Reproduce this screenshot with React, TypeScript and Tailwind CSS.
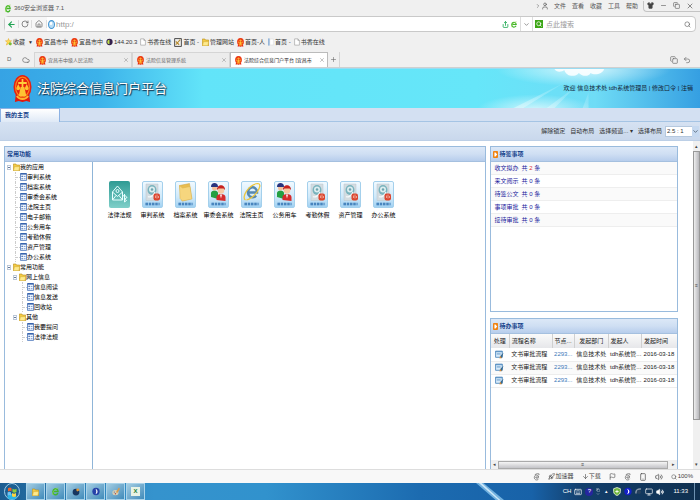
import type { ReactNode } from 'react'
import {
    ArrowDown,
    ArrowLeft,
    ChevronDown,
    ChevronRight,
    Cloud,
    Copy,
    Flag,
    House,
    Keyboard,
    Minus,
    Monitor,
    Plus,
    Rocket,
    RotateCw,
    Search,
    Share,
    Shirt,
    Smartphone,
    Undo2,
    User,
    Volume2,
    X,
} from 'lucide-react'

interface TreeItem {
    label: string
    depth: number
    folder?: boolean
}

interface AppItem {
    label: string
    kind: 'law' | 'disk' | 'folder' | 'people' | 'browser'
}

const tree: TreeItem[] = [
    { label: '我的应用', depth: 0, folder: true },
    { label: '审判系统', depth: 1 },
    { label: '档案系统', depth: 1 },
    { label: '审委会系统', depth: 1 },
    { label: '法院主页', depth: 1 },
    { label: '电子邮箱', depth: 1 },
    { label: '公务用车', depth: 1 },
    { label: '考勤休假', depth: 1 },
    { label: '资产管理', depth: 1 },
    { label: '办公系统', depth: 1 },
    { label: '常用功能', depth: 0, folder: true },
    { label: '网上信息', depth: 1, folder: true },
    { label: '信息阅读', depth: 2 },
    { label: '信息发送', depth: 2 },
    { label: '回收站', depth: 2 },
    { label: '其他', depth: 1, folder: true },
    { label: '我要提问', depth: 2 },
    { label: '法律法规', depth: 2 },
]

const apps: AppItem[] = [
    { label: '法律法规', kind: 'law' },
    { label: '审判系统', kind: 'disk' },
    { label: '档案系统', kind: 'folder' },
    { label: '审委会系统', kind: 'people' },
    { label: '法院主页', kind: 'browser' },
    { label: '公务用车', kind: 'people' },
    { label: '考勤休假', kind: 'disk' },
    { label: '资产管理', kind: 'disk' },
    { label: '办公系统', kind: 'disk' },
]

const signItems = [
    { label: '收文拟办', count: 2 },
    { label: '来文阅示', count: 0 },
    { label: '待签公文', count: 0 },
    { label: '事项审批', count: 0 },
    { label: '接待审批', count: 0 },
]

const indent = ['pl-0', 'pl-[6px]', 'pl-[13px]']

function Emblem({ className }: { className: string }) {
    return (
        <svg viewBox="0 0 20 28" preserveAspectRatio="none" className={className}>
            <path d="M3 19h14l1 8-4-1-4 1-4-1-4 1z" fill="#e3170d" />
            <ellipse cx="10" cy="12" rx="9.5" ry="12" fill="#e8200f" />
            <ellipse cx="10" cy="12" rx="7.300" ry="9.800" fill="none" stroke="#f98a1c" strokeWidth="1.200" />
            <path d="M10 4v16M5.500 8h9" stroke="#ffcf3a" strokeWidth="1.800" />
            <path d="M8 12h4l2 9H6z" fill="#ffc233" />
            <path d="M3.500 13c0 3 4 3 4 0l-2-4zM12.500 13c0 3 4 3 4 0l-2-4z" fill="#ffc233" />
            <path d="M4 21c3 4 9 4 12 0" stroke="#ffb52e" strokeWidth="2" fill="none" />
        </svg>
    )
}

function PageIcon() {
    return (
        <svg viewBox="0 0 10 12" className="h-[8px] w-[6px] shrink-0">
            <path d="M1 .8h5.500L9 3.500v7.700H1zM6.500.8v2.700H9" fill="#fff" stroke="#999" />
        </svg>
    )
}

function FolderIcon() {
    return (
        <svg viewBox="0 0 12 12" preserveAspectRatio="none" className="h-[8px] w-[7px] shrink-0">
            <path d="M.5 1.500h4.500l1 1.500h5.500v8.500H.5z" fill="#f3cb45" stroke="#b98e1c" />
            <path d="M2.500 5.500h9l-1.500 6H.8z" fill="#fdea8e" stroke="#cfa632" strokeWidth=".7" />
        </svg>
    )
}

function LeafIcon() {
    return (
        <svg viewBox="0 0 14 14" preserveAspectRatio="none" className="h-[8px] w-[7px] shrink-0">
            <path d="M1 1h12v12H1z" fill="#f2f7ff" stroke="#4a76bb" strokeWidth="1.500" />
            <path d="M1 1.500h12" stroke="#2f5ca8" strokeWidth="2.500" />
            <path d="M3 6h2.500M3 10h2.500" stroke="#2c57a0" strokeWidth="2" />
            <path d="M7.500 6H11M7.500 10H11" stroke="#5f86c4" strokeWidth="1.500" />
        </svg>
    )
}

function ToggleIcon() {
    return (
        <svg viewBox="0 0 8 8" className="h-[5px] w-[4px] shrink-0" preserveAspectRatio="none">
            <path d="M.7.7h6.600v6.600H.7z" fill="#fff" stroke="#7b93b3" />
            <path d="M2 4h4" stroke="#2c4775" strokeWidth="1.300" />
        </svg>
    )
}

function PlayIcon() {
    return (
        <svg viewBox="0 0 12 14" preserveAspectRatio="none" className="h-[7px] w-[5px] shrink-0">
            <rect width="12" height="14" rx="2" fill="#f08311" />
            <path d="M3.500 3h2.500l4 4-4 4H3.500z" fill="#fff" />
        </svg>
    )
}

function EIcon({ className }: { className: string }) {
    return (
        <svg viewBox="0 0 16 18" preserveAspectRatio="none" className={className}>
            <path d="M13.500 12a6 6 0 1 1 .5-3H4" fill="none" stroke="#43b52b" strokeWidth="3" />
            <path d="M2 16C0 10 8 2 15 2" fill="none" stroke="#8edb45" strokeWidth="1.500" />
        </svg>
    )
}

function BrowserOutline() {
    return (
        <svg viewBox="0 0 16 18" className="h-[8px] w-[7px]" fill="none" stroke="#555" strokeWidth="1.500">
            <path d="M13 13c-3 5-10 3-10-3s8-8 10-1H6c0 3 4 4 7 1" />
            <path d="M4 4c4-3 8-3 10-2l-1 3" />
        </svg>
    )
}

function AppPicture({ kind }: { kind: AppItem['kind'] }) {
    if (kind === 'law') {
        return (
            <svg viewBox="0 0 42 54" preserveAspectRatio="none" className="h-[27px] w-[21px]">
                <defs>
                    <linearGradient id="law" x1="0" y1="0" x2="0" y2="1">
                        <stop offset="0" stopColor="#2f9b94" />
                        <stop offset="1" stopColor="#7fcfc9" />
                    </linearGradient>
                </defs>
                <rect width="42" height="54" rx="4" fill="url(#law)" />
                <path d="M7 22 17 10l10 12v16H7zM7 22l10 9 10-9M7 38l7-9M27 38l-7-9" fill="none" stroke="#e9ffff" strokeWidth="2" />
                <circle cx="17" cy="20" r="3" fill="none" stroke="#e9ffff" strokeWidth="2" />
                <path d="M31 26v16M26 32l5-4 5 5-5 3 4 3-4 3" fill="none" stroke="#e9ffff" strokeWidth="2" />
            </svg>
        )
    }
    return (
        <svg viewBox="0 0 42 54" preserveAspectRatio="none" className="h-[27px] w-[21px]">
            <defs>
                <linearGradient id="tile" x1="0" y1="0" x2="0" y2="1">
                    <stop offset="0" stopColor="#f2faff" />
                    <stop offset=".6" stopColor="#cfe9fa" />
                    <stop offset="1" stopColor="#9fd0f2" />
                </linearGradient>
            </defs>
            <rect x="1" y="1" width="40" height="52" rx="3" fill="url(#tile)" stroke="#a4d0ec" strokeWidth="2" />
            {kind === 'disk' && (
                <>
                    <path d="M8 6h24v33H8z" fill="#d3dce1" stroke="#b9c6cd" />
                    <ellipse cx="20" cy="18" rx="9" ry="10" fill="#79b3bd" />
                    <ellipse cx="20" cy="17" rx="6" ry="6" fill="#dcedf0" />
                    <circle cx="20" cy="17" r="2.500" fill="#6ca5b0" />
                    <path d="M12 31c5 3 11-2 14-9" stroke="#f5f9fa" strokeWidth="2.500" fill="none" />
                    <rect x="23" y="25" width="13" height="14" rx="4" fill="#db4630" />
                    <path d="M27 34v-5M30 35v-8M33 34v-4" stroke="#ffd9cf" strokeWidth="1.200" />
                </>
            )}
            {kind === 'folder' && (
                <>
                    <path d="m9 9 20-4 4 30-19 5z" fill="#e9bd50" stroke="#caa03a" />
                    <path d="m9 9 6 5 15-3 4 25-19 4-5-5z" fill="#f6d67e" stroke="#d9b14c" />
                </>
            )}
            {kind === 'people' && (
                <>
                    <path d="M6 32V24c0-7 14-7 14 0v12z" fill="#24a043" />
                    <circle cx="13" cy="14" r="5" fill="#f4c19a" />
                    <path d="M6 12c-1-11 15-11 14 0z" fill="#28347e" />
                    <path d="M17 38V32c0-8 18-8 18 0v8z" fill="#d62b2c" />
                    <circle cx="26" cy="19" r="6.500" fill="#f6c9a2" />
                    <path d="M18 18c-1-13 17-13 16 0l-3-3H21z" fill="#c7231f" />
                    <path d="m24 27 2 8 2-8z" fill="#fff" />
                </>
            )}
            {kind === 'browser' && (
                <>
                    <path d="M30 29a9 10 0 1 1 2-6H14" fill="none" stroke="#5688b0" strokeWidth="5" />
                    <path d="M9 38C0 34 15 6 34 5c6 1 4 8-1 16-6 9-16 16-22 17" fill="none" stroke="#edc63c" strokeWidth="2.500" />
                </>
            )}
            <path d="M7 46h28" stroke="#2569ad" strokeWidth="5" strokeDasharray="5 1.500" />
            <path d="M7 46h28" stroke="#b6daf3" strokeWidth="1" />
        </svg>
    )
}

function TitleBar() {
    return (
        <div className="flex h-4 items-start justify-between pl-[5px]">
            <div className="flex h-4 items-center gap-[3px]">
                <EIcon className="h-[9px] w-[6px]" />
                <span className="text-[#555]">360安全浏览器 7.1</span>
            </div>
            <div className="flex h-3 items-center text-[#555]">
                <ChevronRight size={6} />
                <User size={8} />
                <div className="flex gap-[6px] px-[5px]">
                    <button>文件</button>
                    <button>查看</button>
                    <button>收藏</button>
                    <button>工具</button>
                    <button>帮助</button>
                </div>
                <div className="flex h-[11px] items-center gap-[6px] rounded-bl-sm border-b border-l border-[#c4c4c4] pr-[6px] pl-[3px]">
                    <button aria-label="皮肤"><Shirt size={7} fill="#444" /></button>
                    <button aria-label="最小化"><Minus size={7} /></button>
                    <button aria-label="还原"><Copy size={7} /></button>
                    <button aria-label="关闭"><X size={8} /></button>
                </div>
            </div>
        </div>
    )
}

function AddressBar() {
    return (
        <div className="mx-1 flex h-4 items-center rounded-sm border border-[#c9c9c9] bg-white">
            <div className="flex h-full items-center bg-[#f7f7f7]">
                <button aria-label="后退" className="px-[2px] text-[#21a453]"><ArrowLeft size={9} strokeWidth={3} /></button>
                <button aria-label="刷新" className="border-x border-[#ddd] px-[2px] text-[#555]"><RotateCw size={8} /></button>
                <button aria-label="主页" className="border-r border-[#ddd] px-[3px] text-[#555]"><House size={8} /></button>
            </div>
            <svg viewBox="0 0 14 16" preserveAspectRatio="none" className="ml-[1px] h-[9px] w-[7px]">
                <ellipse cx="7" cy="8" rx="6" ry="7" fill="#b9ddf5" stroke="#4695d1" strokeWidth="2" />
                <ellipse cx="6" cy="6" rx="2.500" ry="3" fill="#fff" />
            </svg>
            <input aria-label="地址" defaultValue="http:/" className="ml-[1px] min-w-0 flex-1 text-[8px] text-[#999] outline-none" />
            <div className="flex items-center gap-[2px] pr-[3px] text-[#2bae5d]">
                <Share size={7} strokeWidth={3} />
                <EIcon className="h-[7px] w-[6px]" />
            </div>
            <button aria-label="展开" className="h-full border-x border-[#ddd] px-[2px] text-[#555]"><ChevronDown size={7} /></button>
            <div className="flex w-[162px] items-center pl-[2px]">
                <span className="bg-[#3da616] p-[1px] text-white"><Search size={6} strokeWidth={3} /></span>
                <input aria-label="搜索" placeholder="点此搜索" className="ml-[3px] min-w-0 flex-1 text-[7px] outline-none placeholder:text-[#999]" />
                <Search size={7} className="mr-1 text-[#555]" />
            </div>
        </div>
    )
}

function Bookmark({ icon, children }: { icon: ReactNode; children: ReactNode }) {
    return (
        <a href="#" className="flex items-center gap-[1px]">
            {icon}
            {children}
        </a>
    )
}

function Bookmarks() {
    const emblem = <Emblem className="h-[9px] w-[7px]" />
    return (
        <div className="flex h-5 items-center gap-[3px] pl-[5px] text-[#333]">
            <Bookmark
                icon={
                    <svg viewBox="0 0 16 18" className="h-[8px] w-[7px]">
                        <path d="m8 1 2 5h5l-4 4 2 6-5-3-5 3 2-6-4-4h5z" fill="#ffdc55" stroke="#e0a018" />
                        <circle cx="12" cy="13" r="3.500" fill="#79bd36" />
                    </svg>
                }
            >
                收藏
            </Bookmark>
            <span className="text-[5px]">▼</span>
            <Bookmark icon={emblem}>宜昌市中</Bookmark>
            <Bookmark icon={emblem}>宜昌市中</Bookmark>
            <Bookmark
                icon={
                    <svg viewBox="0 0 12 14" className="h-[8px] w-[7px]">
                        <circle cx="6" cy="7" r="5.500" fill="#34204f" />
                        <path d="M6 3a4 4 0 0 0 0 8z" fill="#bfe04a" />
                    </svg>
                }
            >
                144.20.3
            </Bookmark>
            <Bookmark icon={<PageIcon />}>书香在线</Bookmark>
            <Bookmark
                icon={
                    <svg viewBox="0 0 14 16" className="h-[9px] w-[8px]">
                        <path d="M1 1h12v14H1z" fill="#eee" stroke="#333" strokeWidth="1.500" />
                        <path d="m3 12 8-9M3 6l6 6" stroke="#b78c2f" strokeWidth="2" />
                    </svg>
                }
            >
                首页 -
            </Bookmark>
            <Bookmark icon={<FolderIcon />}>管理网站</Bookmark>
            <Bookmark icon={emblem}>首页-人</Bookmark>
            <Bookmark
                icon={
                    <svg viewBox="0 0 10 12" className="h-[8px] w-[6px]">
                        <path d="M3 1h6v10H3z" fill="#fff" stroke="#ddd" />
                        <path d="M1.500 0v12" stroke="#4a86c8" strokeWidth="1.500" />
                    </svg>
                }
            >
                首页 -
            </Bookmark>
            <Bookmark icon={<PageIcon />}>书香在线</Bookmark>
        </div>
    )
}

function BrowserTab({ title, active }: { title: string; active?: boolean }) {
    return (
        <div className={`flex h-[15px] w-[98px] items-center gap-[2px] border-x border-t pr-[2px] pl-1 ${active ? 'border-[#bbb] bg-white text-[#222]' : 'border-[#d5d5d5] bg-[#ececec] text-[#666]'}`}>
            <Emblem className="h-[9px] w-[7px] shrink-0" />
            <button className="flex-1 text-left text-[5px] whitespace-nowrap">{title}</button>
            <button aria-label="关闭标签"><X size={6} className="text-[#888]" /></button>
        </div>
    )
}

function BrowserTabs() {
    return (
        <div className="flex h-4 items-end border-b border-[#d0d0d0] text-[#666]">
            <div className="flex h-[15px] w-[34px] items-center justify-between pr-1 pl-[7px]">
                <span>D</span>
                <Cloud size={8} />
            </div>
            <BrowserTab title="宜昌市中级人民法院" />
            <BrowserTab title="法院信息管理系统" />
            <BrowserTab title="法院综合信息门户平台 [宜昌市" active />
            <button aria-label="新标签" className="flex h-[15px] items-center border-r border-[#d5d5d5] px-[2px]"><Plus size={7} /></button>
            <div className="ml-auto flex h-[15px] items-center gap-[5px] pr-[9px]">
                <Copy size={8} />
                <Undo2 size={8} />
            </div>
        </div>
    )
}

function Banner() {
    return (
        <header className="relative flex h-10 items-center justify-between border-t border-[#9adcf2] bg-[linear-gradient(to_right,#36a3e4_0%,#3cb2ea_14%,#62e4f9_29%,#66e6f9_68%,#6fdcf6_85%,#359fe2_100%)] px-[7px]">
            <svg viewBox="0 0 240 40" preserveAspectRatio="none" className="absolute inset-y-0 right-0 h-full w-1/3">
                <defs>
                    <linearGradient id="ray" x1="1" y1="0" x2="0" y2="1">
                        <stop offset="0" stopColor="#fff" stopOpacity=".05" />
                        <stop offset="1" stopColor="#fff" stopOpacity=".4" />
                    </linearGradient>
                    <radialGradient id="sun">
                        <stop offset="0" stopColor="#fff" stopOpacity=".7" />
                        <stop offset="1" stopColor="#fff" stopOpacity="0" />
                    </radialGradient>
                </defs>
                <ellipse cx="120" cy="0" rx="90" ry="18" fill="url(#sun)" />
                <ellipse cx="70" cy="42" rx="60" ry="16" fill="url(#sun)" />
                <path d="M100 14 48 40h10zM112 18 82 40h8zM125 24l-6 16h6z" fill="url(#ray)" />
                <path d="M90 0c2 4 8 3 10 1 3 8 12 7 15 3 5 5 11 3 12 0 4 3 13 1 14-4z" fill="#fff" fillOpacity=".85" />
            </svg>
            <h1 className="relative flex items-center gap-[5px] pl-[6px] text-[13px] text-white [text-shadow:0_0_2px_#143a56,1px_1px_1px_#143a56]">
                <Emblem className="h-[28px] w-[19px]" />
                法院综合信息门户平台
            </h1>
            <div className="relative text-[#123]">
                欢迎 信息技术处 tdh系统管理员 | <a href="#">修改口令</a> | <a href="#">注销</a>
            </div>
        </header>
    )
}

function PanelHeader({ title, icon }: { title: string; icon?: boolean }) {
    return (
        <h2 className="flex h-[15px] items-center gap-[2px] border-b border-[#a5c0df] bg-linear-to-b from-[#dce8f7] via-[#cfdff3] to-[#b7cdec] px-[2px] font-bold text-[#15428b]">
            {icon && <PlayIcon />}
            {title}
        </h2>
    )
}

function Tree() {
    return (
        <ul className="w-[88px] shrink-0 border-r border-[#8fb5d8] pl-[2px] text-black">
            {tree.map((item, i) => (
                <li key={i} className={`flex h-[10px] items-center ${indent[item.depth]}`}>
                    {item.folder ? (
                        <>
                            <ToggleIcon />
                            <span className="pl-[2px]"><FolderIcon /></span>
                        </>
                    ) : (
                        <>
                            <span className="ml-[2px] h-full border-l border-dotted border-[#ccc]" />
                            <span className="w-[4px] border-t border-dotted border-[#ccc]" />
                            <LeafIcon />
                        </>
                    )}
                    <a href="#">{item.label}</a>
                </li>
            ))}
        </ul>
    )
}

function TodoTable() {
    return (
        <table className="w-full table-fixed text-left whitespace-nowrap text-[#222]">
            <thead>
                <tr className="h-[14px] bg-linear-to-b from-[#fafafa] to-[#e6e7ea]">
                    <th className="w-[10%] border-r border-[#d0d0d0] text-center font-normal">处理</th>
                    <th className="w-[23%] border-r border-[#d0d0d0] pl-[2px] font-normal">流程名称</th>
                    <th className="w-[12%] border-r border-[#d0d0d0] pl-[2px] font-normal">节点...</th>
                    <th className="w-[18%] border-r border-[#d0d0d0] text-center font-normal">发起部门</th>
                    <th className="w-[18%] border-r border-[#d0d0d0] pl-[2px] font-normal">发起人</th>
                    <th className="w-[19%] pl-[2px] font-normal">发起时间</th>
                </tr>
            </thead>
            <tbody>
                {[1, 2, 3].map((row) => (
                    <tr key={row} className="h-[13px] border-b border-[#ededed] even:bg-[#fafafa]">
                        <td>
                            <svg viewBox="0 0 16 16" className="mx-auto size-[9px]">
                                <path d="M1 2h12v11H1z" fill="#d7eafa" stroke="#4c87bd" strokeWidth="1.500" />
                                <path d="M1 3h12M3 7h7" stroke="#4c87bd" strokeWidth="1.500" />
                                <path d="m15 5-3 10-3-4z" fill="#35688f" />
                                <path d="m9 10 3 4-4 1z" fill="#d78a35" />
                            </svg>
                        </td>
                        <td className="pl-[2px]">文书审批流程</td>
                        <td className="pl-[2px]"><a href="#" className="text-[#3a78b9]">2293...</a></td>
                        <td className="text-center">信息技术处</td>
                        <td className="pl-[2px]">tdh系统管...</td>
                        <td className="pl-[2px]">2016-03-18</td>
                    </tr>
                ))}
            </tbody>
        </table>
    )
}

function Portal() {
    return (
        <main className="flex flex-1 bg-white">
            <div className="flex flex-1 gap-1 pt-[5px] pl-1">
                <section className="flex min-w-0 flex-28 flex-col border-x border-t border-[#99bbdd]">
                    <PanelHeader title="常用功能" />
                    <div className="flex flex-1">
                        <Tree />
                        <div className="flex flex-wrap content-start pt-[19px] pl-[10px]">
                            {apps.map((app) => (
                                <a key={app.label} href="#" className="flex w-[33px] flex-col items-center gap-[3px] whitespace-nowrap text-black">
                                    <AppPicture kind={app.kind} />
                                    {app.label}
                                </a>
                            ))}
                        </div>
                    </div>
                </section>
                <div className="flex min-w-0 flex-11 flex-col gap-[6px]">
                    <section className="flex-11 border border-[#99bbdd]">
                        <PanelHeader title="待签事项" icon />
                        <ul className="text-[#1a1a9c]">
                            {signItems.map((item) => (
                                <li key={item.label} className="flex h-[13px] items-center gap-[3px] border-b border-[#eee] pl-1 odd:bg-[#fafafa]">
                                    <a href="#">{item.label}</a>
                                    <span>共 <b className={item.count > 0 ? 'font-normal text-[#d33]' : 'font-normal'}>{item.count}</b> 条</span>
                                </li>
                            ))}
                        </ul>
                    </section>
                    <section className="flex flex-10 flex-col border-x border-t border-[#99bbdd]">
                        <PanelHeader title="待办事项" icon />
                        <TodoTable />
                        <div className="mt-auto flex h-[9px] items-center justify-between bg-[#f0f0f0] px-[2px] text-[5px] text-[#444]">
                            <span>◂</span>
                            <span className="mr-[4px] ml-[2px] flex h-[8px] flex-1 items-center justify-center border border-[#aaa] bg-linear-to-b from-[#f5f5f5] to-[#c4c4c8]">≡</span>
                            <span>▸</span>
                        </div>
                    </section>
                </div>
            </div>
            <div className="ml-[15px] flex w-[7px] flex-col items-center bg-[#f0f0f0] text-[5px] text-[#444]">
                <span className="flex h-[10px] items-center">▴</span>
                <span className="flex w-full flex-11 items-center justify-center border border-[#999] bg-linear-to-r from-[#eee] to-[#b8b8bc]">≡</span>
                <span className="flex flex-2 items-end">▾</span>
            </div>
        </main>
    )
}

function StatusBar() {
    return (
        <div className="flex h-[14px] items-center justify-end gap-[8px] border-t border-[#ddd] bg-[#f8f8f8] pr-[7px] text-[#444]">
            <BrowserOutline />
            <span className="flex items-center gap-[1px]"><Rocket size={7} />加速器</span>
            <span className="flex items-center"><ArrowDown size={7} />下载</span>
            <Flag size={7} />
            <BrowserOutline />
            <Smartphone size={8} />
            <Volume2 size={8} />
            <span className="flex items-center gap-[1px]"><Search size={6} />100%</span>
        </div>
    )
}

function TaskButton({ children }: { children: ReactNode }) {
    return (
        <button className="flex h-full w-[19px] items-center justify-center border border-[#a9d3ea] bg-linear-to-br from-[#a3cde2] to-[#3f8bba]">
            {children}
        </button>
    )
}

function TaskBar() {
    return (
        <footer className="relative flex h-[17px] items-center bg-[linear-gradient(to_right,#1c5c90_0%,#2a7db5_10%,#3593cd_22%,#3192cd_38%,#1c6bb0_60%,#1862a8_76%,#133f6c_83%,#10304f_100%)] pl-[4px] text-white">
            <svg viewBox="0 0 30 17" preserveAspectRatio="none" className="absolute inset-y-0 left-[68%] h-full w-[4%]">
                <path d="M0 0h8l22 17h-9z" fill="#8fcbf0" fillOpacity=".75" />
                <path d="M3 0h3l20 17h-2z" fill="#e3f5ff" fillOpacity=".8" />
            </svg>
            <button aria-label="开始" className="mr-[6px]">
                <svg viewBox="0 0 32 36" preserveAspectRatio="none" className="h-[17px] w-4">
                    <ellipse cx="16" cy="18" rx="15" ry="17" fill="#1b5e92" stroke="#a4cfe9" strokeWidth="2" />
                    <ellipse cx="16" cy="29" rx="9" ry="6" fill="#2bb5e6" />
                    <path d="M8 11c3-2 5-2 7 0v7c-2-2-4-2-7 0z" fill="#f0602a" />
                    <path d="M17 12c3 2 5 2 8 0v7c-3 2-5 2-8 0z" fill="#8fca3f" />
                    <path d="M7 20c3-2 5-2 7 0v7c-2-2-4-2-7 0z" fill="#6fc4f4" />
                    <path d="M16 21c3 2 5 2 8 0v7c-3 2-5 2-8 0z" fill="#ffd23e" />
                </svg>
            </button>
            <div className="flex h-full gap-[1px]">
                <TaskButton><FolderIcon /></TaskButton>
                <TaskButton><EIcon className="h-[9px] w-[7px]" /></TaskButton>
                <TaskButton>
                    <svg viewBox="0 0 14 16" className="h-[9px] w-[8px]">
                        <circle cx="7" cy="9" r="6" fill="#173660" />
                        <path d="M7 5c3-4 6-3 6 1L9 8z" fill="#e09538" />
                    </svg>
                </TaskButton>
                <TaskButton>
                    <svg viewBox="0 0 14 16" className="h-[9px] w-[8px]">
                        <circle cx="7" cy="8" r="6.500" fill="#2742a8" />
                        <path d="M6 3c5 2 5 8 0 10 2-3 2-7 0-10z" fill="#fff" />
                    </svg>
                </TaskButton>
                <TaskButton>
                    <svg viewBox="0 0 14 16" className="h-[9px] w-[8px]">
                        <ellipse cx="6" cy="10" rx="5.500" ry="4.500" fill="#d5d0b8" />
                        <path d="m7 9 5-8 2 2-5 8z" fill="#d99a4c" />
                        <circle cx="4" cy="9" r="1.200" fill="#5877a8" />
                        <circle cx="6" cy="12" r="1.200" fill="#a84848" />
                    </svg>
                </TaskButton>
                <TaskButton><span className="bg-[#e8f3e5] px-[2px] font-bold text-[#217a36]">X</span></TaskButton>
            </div>
            <div className="ml-auto flex items-center gap-[3px]">
                <span>CH</span>
                <Keyboard size={8} />
                <span className="flex size-[8px] items-center justify-center rounded-full bg-[#26269e]">?</span>
                <span className="flex flex-col items-center">
                    <Copy size={4} />
                    <ChevronDown size={4} />
                </span>
                <span className="px-[2px] text-[5px]">▴</span>
                <svg viewBox="0 0 14 16" className="h-[9px] w-[8px]">
                    <path d="M7 1l6 2v5c0 4-3 6-6 7-3-1-6-3-6-7V3z" fill="#6cb33a" stroke="#e8f4dc" strokeWidth="1.500" />
                    <path d="M7 5v6M4 8h6" stroke="#fff" strokeWidth="1.500" />
                </svg>
                <svg viewBox="0 0 14 16" className="h-[9px] w-[8px]">
                    <circle cx="7" cy="8" r="6.500" fill="#1320c8" />
                    <path d="M5 3c6 2 6 8 0 10 3-3 3-7 0-10z" fill="#fff" />
                </svg>
                <svg viewBox="0 0 14 16" className="h-[9px] w-[7px]">
                    <path d="M2 12C1 5 6 2 12 3" fill="none" stroke="#8797a8" strokeWidth="3" />
                    <circle cx="8" cy="9" r="4" fill="#27415e" />
                </svg>
                <Monitor size={8} />
                <Volume2 size={8} fill="#fff" />
                <span className="px-[6px]">11:33</span>
            </div>
            <span className="h-full w-[6px] border-l border-[#6d91b0]" />
        </footer>
    )
}

function App() {
    return (
        <div className="flex min-h-screen flex-col bg-[#f0f0f0] font-['Liberation_Sans','Noto_Sans_CJK_SC',sans-serif] text-[6px] leading-[9px]">
            <TitleBar />
            <AddressBar />
            <Bookmarks />
            <BrowserTabs />
            <Banner />
            <nav className="flex h-[14px] items-start border-b border-[#a5c4e4] bg-[#d3e0f2]">
                <a href="#" className="flex h-[14px] w-[60px] items-center border border-b-0 border-[#8db2e3] bg-linear-to-b from-white to-[#dfe9f6] px-[4px] font-bold text-[#15428b]">我的主页</a>
            </nav>
            <div className="flex h-[19px] items-center justify-end gap-[5px] border-b border-[#bccfe6] bg-linear-to-b from-[#d6e2f2] to-[#c9d8ec] text-[#333]">
                <button>解除锁定</button>
                <button>自动布局</button>
                <button>选择频道... ▾</button>
                <label className="flex items-center gap-[3px] pr-[1px]">
                    选择布局
                    <span className="relative flex items-center">
                        <select className="h-[11px] w-[34px] appearance-none border border-[#b5c8de] bg-white pl-[1px] outline-none">
                            <option>2.5 : 1</option>
                        </select>
                        <ChevronDown size={7} className="pointer-events-none absolute right-0 h-[11px] bg-[#c6d9f0] text-[#234]" />
                    </span>
                </label>
            </div>
            <Portal />
            <StatusBar />
            <TaskBar />
        </div>
    )
}

export default App
